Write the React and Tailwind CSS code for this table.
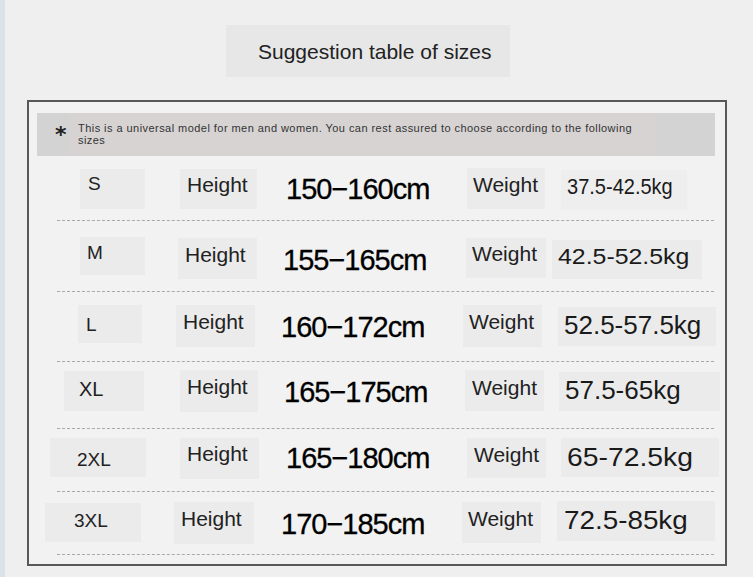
import React from "react";

const cell = "shrink-0 bg-[#ebebeb] leading-none text-[#222]";
const lab = "text-[21px] leading-none";
const val = "shrink-0 leading-none text-[29px] tracking-[-1px] text-black [-webkit-text-stroke:0.3px_black]";
const kg = "inline-block origin-left leading-none text-[#1a1a1a]";

function Line() {
  return <div className="ml-[28px] w-[657px] border-t border-dashed border-[#a9a9a9]" />;
}

export default function App() {
  return (
    <div className="w-[753px] h-[577px] bg-[#efefef] flex font-['Liberation_Sans',Arial,sans-serif] overflow-hidden">
      <div className="w-[5px] shrink-0 bg-[#dbe2ea]" />
      <div className="flex flex-col">
        <div className="mt-[25px] ml-[221px] w-[284px] h-[52px] bg-[#e7e7e7] pl-[32px] pt-[16px] text-[21px] leading-none text-[#222]">
          Suggestion table of sizes
        </div>
        <div className="mt-[23px] ml-[22px] w-[700px] h-[466px] border-2 border-[#585858] bg-[#f2f2f2] flex flex-col">
          {/* note */}
          <div className="mt-[11px] ml-[8px] w-[678px] h-[43px] flex shrink-0">
            <div className="w-[33px] bg-[#d3d3d3] pl-[18px] pt-[11px] text-[22px] font-bold leading-none font-['DejaVu_Sans',sans-serif] text-[#222]">
              *
            </div>
            <div className="w-[585px] bg-[#d7d3d3] pl-[8px] pt-[9px] text-[11px] leading-[12px] tracking-[0.45px] text-[#333]">
              This is a universal model for men and women. You can rest assured to choose according to the following
              <br />
              sizes
            </div>
            <div className="flex-1 bg-[#d3d3d3]" />
          </div>

          {/* Row 1 */}
          <div className="flex items-start h-[64px] shrink-0">
            <div className={`${cell} ml-[51px] mt-[13px] w-[65px] h-[40px] pl-[8px] pt-[5px] text-[19px]`}>S</div>
            <div className={`${cell} ml-[35px] mt-[13px] w-[77px] h-[40px] pl-[7px] pt-[5px] ${lab}`}>Height</div>
            <div className={`${val} ml-[29px] mt-[19px] w-[181px]`}>150−160cm</div>
            <div className={`${cell} mt-[12px] w-[78px] h-[41px] pl-[6px] pt-[6px] ${lab}`}>Weight</div>
            <div className={`${cell} ml-[16px] mt-[14px] w-[126px] h-[40px] pl-[6px] pt-[6px] bg-[#eeeeee]`}>
              <span className={`${kg} text-[22px] scale-x-[0.91]`}>37.5-42.5kg</span>
            </div>
          </div>
          <Line />

          {/* Row 2 */}
          <div className="flex items-start h-[70px] shrink-0">
            <div className={`${cell} ml-[51px] mt-[16px] w-[65px] h-[38px] pl-[7px] pt-[6px] text-[19px]`}>M</div>
            <div className={`${cell} ml-[33px] mt-[17px] w-[79px] h-[41px] pl-[7px] pt-[6px] ${lab}`}>Height</div>
            <div className={`${val} ml-[26px] mt-[25px] w-[183px]`}>155−165cm</div>
            <div className={`${cell} mt-[17px] w-[80px] h-[40px] pl-[6px] pt-[5px] ${lab}`}>Weight</div>
            <div className={`${cell} ml-[6px] mt-[19px] w-[150px] h-[39px] pl-[6px] pt-[6px]`}>
              <span className={`${kg} text-[22px] scale-x-[1.13]`}>42.5-52.5kg</span>
            </div>
          </div>
          <Line />

          {/* Row 3 */}
          <div className="flex items-start h-[69px] shrink-0">
            <div className={`${cell} ml-[49px] mt-[13px] w-[64px] h-[38px] pl-[8px] pt-[10px] text-[19px]`}>L</div>
            <div className={`${cell} ml-[34px] mt-[13px] w-[79px] h-[42px] pl-[7px] pt-[6px] ${lab}`}>Height</div>
            <div className={`${val} ml-[26px] mt-[21px] w-[182px]`}>160−172cm</div>
            <div className={`${cell} mt-[13px] w-[79px] h-[42px] pl-[6px] pt-[6px] ${lab}`}>Weight</div>
            <div className={`${cell} ml-[16px] mt-[15px] w-[158px] h-[39px] pl-[6px] pt-[5px]`}>
              <span className={`${kg} text-[26px]`}>52.5-57.5kg</span>
            </div>
          </div>
          <Line />

          {/* Row 4 */}
          <div className="flex items-start h-[66px] shrink-0">
            <div className={`${cell} ml-[35px] mt-[9px] w-[80px] h-[40px] pl-[15px] pt-[8px] text-[20px]`}>XL</div>
            <div className={`${cell} ml-[36px] mt-[8px] w-[78px] h-[42px] pl-[7px] pt-[6px] ${lab}`}>Height</div>
            <div className={`${val} ml-[26px] mt-[16px] w-[181px]`}>165−175cm</div>
            <div className={`${cell} mt-[8px] w-[79px] h-[41px] pl-[7px] pt-[7px] ${lab}`}>Weight</div>
            <div className={`${cell} ml-[15px] mt-[10px] w-[161px] h-[39px] pl-[6px] pt-[5px]`}>
              <span className={`${kg} text-[26px]`}>57.5-65kg</span>
            </div>
          </div>
          <Line />

          {/* Row 5 */}
          <div className="flex items-start h-[62px] shrink-0">
            <div className={`${cell} ml-[21px] mt-[9px] w-[96px] h-[39px] pl-[27px] pt-[12px] text-[19px]`}>2XL</div>
            <div className={`${cell} ml-[34px] mt-[9px] w-[79px] h-[41px] pl-[7px] pt-[5px] ${lab}`}>Height</div>
            <div className={`${val} ml-[27px] mt-[15px] w-[181px]`}>165−180cm</div>
            <div className={`${cell} mt-[9px] w-[79px] h-[40px] pl-[7px] pt-[6px] ${lab}`}>Weight</div>
            <div className={`${cell} ml-[15px] mt-[9px] w-[158px] h-[39px] pl-[6px] pt-[6px]`}>
              <span className={`${kg} text-[26px] scale-x-[1.09]`}>65-72.5kg</span>
            </div>
          </div>
          <Line />

          {/* Row 6 */}
          <div className="flex items-start h-[62px] shrink-0">
            <div className={`${cell} ml-[16px] mt-[11px] w-[96px] h-[39px] pl-[29px] pt-[8px] text-[19px]`}>3XL</div>
            <div className={`${cell} ml-[33px] mt-[10px] w-[80px] h-[42px] pl-[7px] pt-[6px] ${lab}`}>Height</div>
            <div className={`${val} ml-[27px] mt-[18px] w-[181px]`}>170−185cm</div>
            <div className={`${cell} mt-[10px] w-[79px] h-[41px] pl-[6px] pt-[6px] ${lab}`}>Weight</div>
            <div className={`${cell} ml-[16px] mt-[9px] w-[158px] h-[40px] pl-[7px] pt-[6px]`}>
              <span className={`${kg} text-[26px] scale-x-[1.07]`}>72.5-85kg</span>
            </div>
          </div>
          <Line />
        </div>
      </div>
    </div>
  );
}
